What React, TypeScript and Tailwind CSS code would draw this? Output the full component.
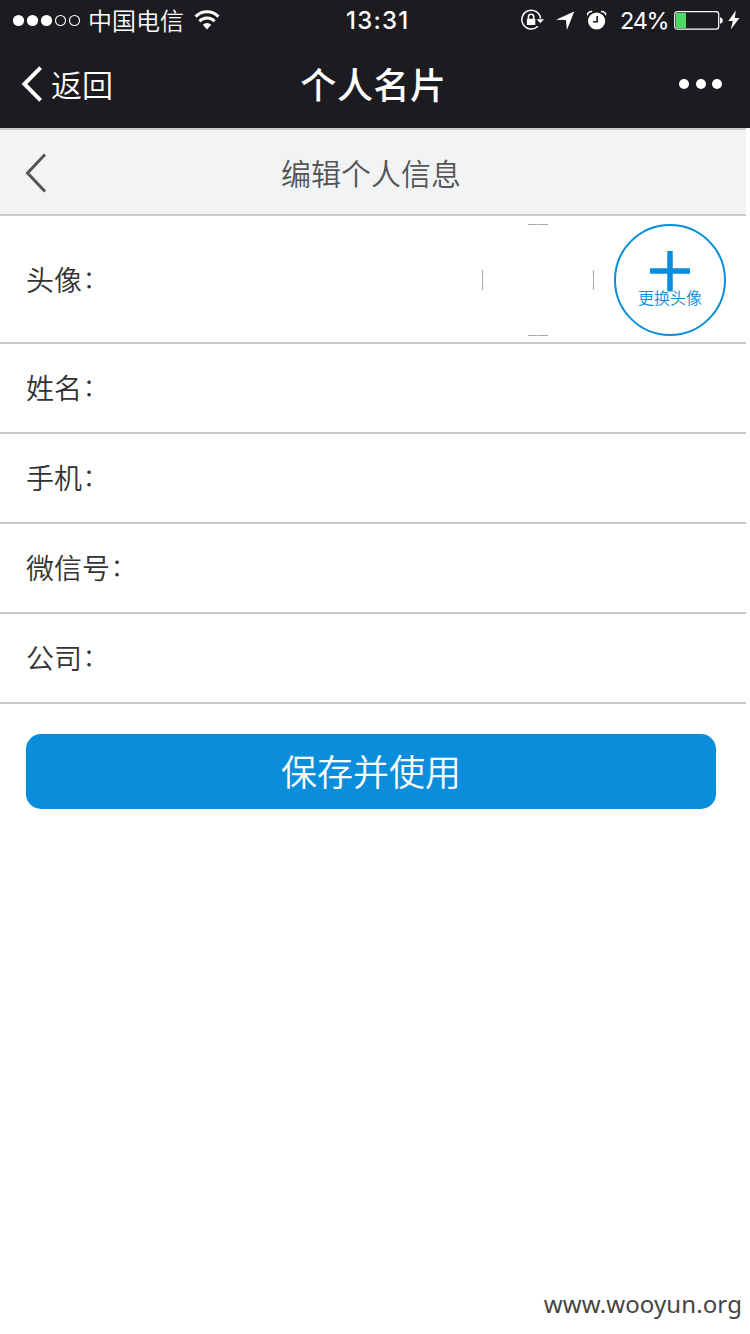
import type { ReactNode } from "react";

const SignalDots = () => (
  <svg width="68" height="14" viewBox="0 0 68 14" fill="white">
    <circle cx="6.5" cy="7.5" r="5.6" />
    <circle cx="20.5" cy="7.5" r="5.6" />
    <circle cx="34.5" cy="7.5" r="5.6" />
    <circle cx="48.5" cy="7.5" r="5" fill="none" stroke="white" strokeWidth="1.1" />
    <circle cx="62.5" cy="7.5" r="5" fill="none" stroke="white" strokeWidth="1.1" />
  </svg>
);

const WifiIcon = () => (
  <svg width="26" height="20" viewBox="0 0 26 20" fill="none" stroke="white" strokeWidth="3">
    <path d="M1.6 6.6a16 16 0 0 1 22.8 0" />
    <path d="M5.4 11.2a10.6 10.6 0 0 1 15.2 0" strokeWidth="2.8" />
    <path d="M13 19.4l-4.2-4.6a6 6 0 0 1 8.4 0z" fill="white" stroke="none" />
  </svg>
);

const RotationLockIcon = () => (
  <svg width="24" height="22" viewBox="0 0 24 22" fill="none" stroke="white">
    <path d="M17.9 17.3A9.4 9.4 0 1 1 20.6 9.6" strokeWidth="1.5" />
    <path d="M16.6 10.2h7.4l-3.7 4z" fill="white" stroke="none" />
    <path d="M8.4 10.4V8a2.7 2.7 0 0 1 5.4 0v2.4" strokeWidth="1.5" />
    <rect x="6.9" y="9.8" width="8.4" height="6.2" rx="0.6" fill="white" stroke="none" />
  </svg>
);

const LocationIcon = () => (
  <svg width="20" height="20" viewBox="0 0 20 20" fill="white">
    <path d="M18.2 1.6L0 9.8l10 .2.9 9.9z" />
  </svg>
);

const AlarmIcon = () => (
  <svg width="20" height="20" viewBox="0 0 20 20">
    <circle cx="9.6" cy="11" r="8.6" fill="white" />
    <path d="M10.2 6v5.8H6" fill="none" stroke="#1c1b20" strokeWidth="1.6" />
    <path d="M.7 5.2V3.4L2.8 1.7 5.2 1.5M18.5 5.2V3.4L16.4 1.7 14 1.5" fill="none" stroke="white" strokeWidth="1.4" />
  </svg>
);

const BatteryIcon = () => (
  <svg width="50" height="20" viewBox="0 0 50 20">
    <rect x="0.7" y="1.6" width="44" height="17.6" rx="2.6" fill="none" stroke="white" strokeWidth="1.2" />
    <rect x="2" y="3" width="10" height="15" fill="#4cd964" />
    <path d="M46 7.5h1a3.4 3.4 0 0 1 0 6h-1z" fill="white" />
  </svg>
);

const ChargingIcon = () => (
  <svg width="12" height="20" viewBox="0 0 12 20" fill="white">
    <path d="M7.8 0.6L0.4 11h4.4L2.8 19.6 11.4 8H6.8z" />
  </svg>
);

const StatusBar = () => (
  <div className="flex h-10 items-center pl-3 pr-1.5 text-2xl leading-10">
    <div className="flex w-[334px] items-center">
      <SignalDots />
      <span className="ml-2 font-[350]">中国电信</span>
      <span className="ml-2.5">
        <WifiIcon />
      </span>
    </div>
    <span className="mt-0.5 w-[174px] font-['Inter'] text-2xl leading-10 font-medium tracking-[1.2px]">13:31</span>
    <div className="flex flex-1 items-center">
      <RotationLockIcon />
      <span className="ml-3">
        <LocationIcon />
      </span>
      <span className="ml-[11px]">
        <AlarmIcon />
      </span>
      <span className="mt-0.5 ml-[13px] w-[49px] font-['Inter'] text-[23.5px] tracking-[-1.3px]">24%</span>
      <span className="ml-[5px]">
        <BatteryIcon />
      </span>
      <span className="ml-1">
        <ChargingIcon />
      </span>
    </div>
  </div>
);

const NavBar = () => (
  <div className="flex h-22 items-center justify-between pl-[21px] pr-7">
    <div className="flex w-40 items-center">
      <svg width="22" height="36" viewBox="0 0 22 36" fill="none" stroke="white" strokeWidth="4">
        <path d="M19.6 1.6L3.4 18l16.2 16.4" />
      </svg>
      <span className="ml-2 text-[31px] leading-[44px] font-[350]">返回</span>
    </div>
    <h1 className="-mt-0.5 ml-1 text-[36px] leading-[44px] font-medium tracking-[0.6px]">个人名片</h1>
    <div className="flex w-40 justify-end gap-[6.5px]">
      <span className="size-2.5 rounded-full bg-white" />
      <span className="size-2.5 rounded-full bg-white" />
      <span className="size-2.5 rounded-full bg-white" />
    </div>
  </div>
);

interface FieldRowProps {
  label: string;
  className?: string;
  children?: ReactNode;
}

const FieldRow = ({ label, className = "h-[90px]", children }: FieldRowProps) => (
  <div className={`flex items-center border-b-2 border-[#cbcbcd] pl-[26px] pr-5 ${className}`}>
    <label className="flex-1 text-[28px] leading-10 font-[350] text-[#333]">
      {label}
      <span className="inline-block translate-x-px -translate-y-[3px] text-[24px]">：</span>
    </label>
    {children}
  </div>
);

const App = () => {
  return (
    <div className="flex h-[1334px] w-[750px] flex-col bg-white font-['Noto_Sans_CJK_SC',sans-serif]">
      <header className="h-32 bg-[#1c1b20] text-white">
        <StatusBar />
        <NavBar />
      </header>

      <main className="flex w-[746px] flex-1 flex-col">
        {/* Page title */}
        <div className="flex h-22 items-center border-y-2 border-[#cbcbcd] bg-[#f2f3f5] px-[25px]">
          <svg className="mt-px" width="22" height="40" viewBox="0 0 22 40" fill="none" stroke="#555" strokeWidth="3">
            <path d="M20 1.5L2.5 20 20 38.5" />
          </svg>
          <h2 className="flex-1 pr-[26px] text-center text-3xl leading-10 font-[350] text-[#555]">编辑个人信息</h2>
        </div>

        {/* Form */}
        <FieldRow label="头像" className="h-32 pt-0.5">
          {/* Empty avatar, only the edges of the ring show */}
          <svg className="mr-5" width="112" height="112" viewBox="0 0 112 112" fill="none" stroke="#999">
            <path d="M46 .7Q56 -.2 66 .7M46 111.3Q56 112.2 66 111.3M.7 46Q-.2 56 .7 66M111.3 46Q112.2 56 111.3 66" strokeWidth="0.9" />
          </svg>
          <button className="flex size-28 flex-col items-center rounded-full border-2 border-[#0a8edc] pt-[25px] text-[#0a8edc]">
            <svg width="42" height="41" viewBox="0 0 42 41" fill="none" stroke="currentColor" strokeWidth="5.5">
              <path d="M21 0v40.5M1 20h40" />
            </svg>
            <span className="-mt-[5px] text-base leading-5 font-[350]">更换头像</span>
          </button>
        </FieldRow>
        <FieldRow label="姓名" />
        <FieldRow label="手机" />
        <FieldRow label="微信号" />
        <FieldRow label="公司" />

        <button className="mt-[30px] ml-[26px] h-[75px] w-[690px] rounded-[15px] bg-[#0a8edc] pb-1 text-4xl font-[350] text-white">
          保存并使用
        </button>
      </main>

      <footer className="pr-2 pb-3 text-right font-['Noto_Sans'] text-2xl leading-9 tracking-[0.1px] text-[#444]">
        www.wooyun.org
      </footer>
    </div>
  );
};

export default App;
